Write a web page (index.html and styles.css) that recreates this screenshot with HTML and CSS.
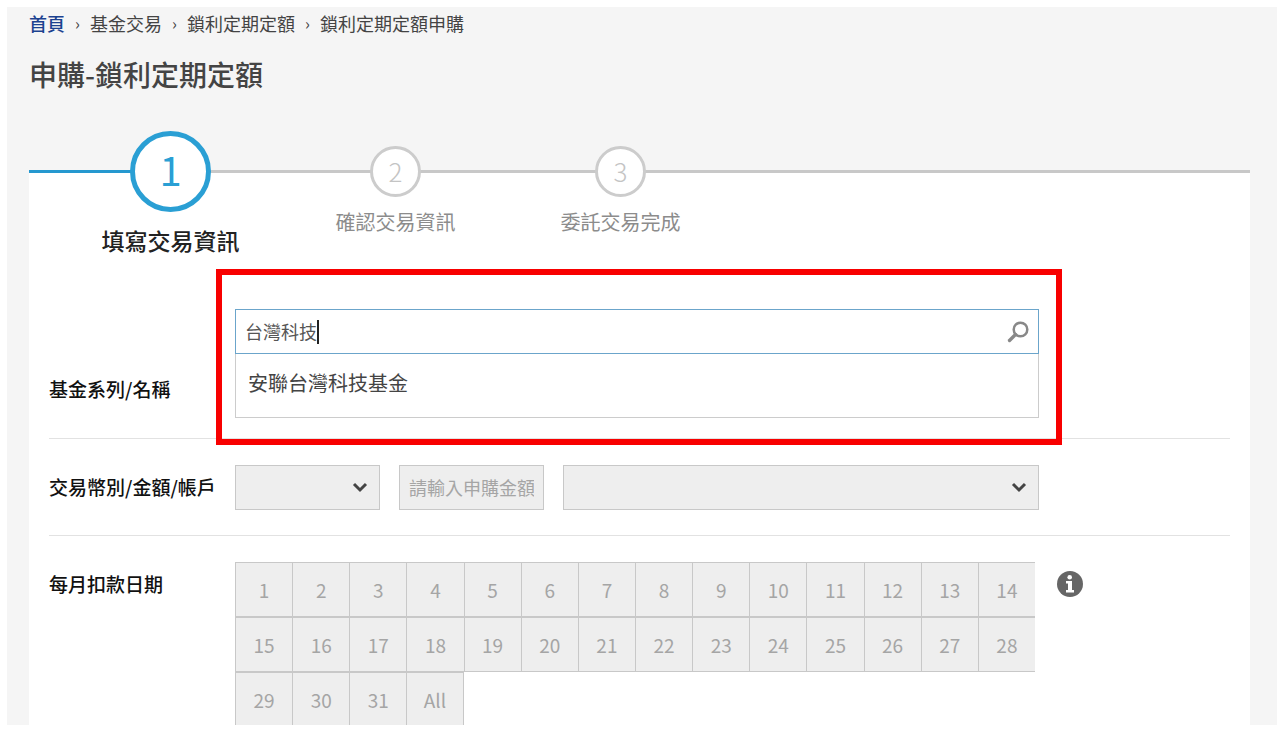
FILE: index.html
```html
<!DOCTYPE html>
<html lang="zh-Hant">
<head>
    <meta charset="UTF-8">
    <meta name="viewport" content="width=device-width, initial-scale=1.0">
    <title>申購-鎖利定期定額</title>
    <link rel="stylesheet" href="styles.css">
</head>
<body>
    <div class="page">
        <nav>
            <ol class="breadcrumb">
                <li><a href="#">首頁</a></li>
                <li>基金交易</li>
                <li>鎖利定期定額</li>
                <li>鎖利定期定額申購</li>
            </ol>
        </nav>
        <h1>申購-鎖利定期定額</h1>

        <main class="panel">
            <ol class="steps">
                <li class="step active">
                    <span class="step-number">1</span>
                    <span class="step-label">填寫交易資訊</span>
                </li>
                <li class="step">
                    <span class="step-number">2</span>
                    <span class="step-label">確認交易資訊</span>
                </li>
                <li class="step">
                    <span class="step-number">3</span>
                    <span class="step-label">委託交易完成</span>
                </li>
            </ol>

            <form class="form">
                <div class="row fund-row">
                    <label class="row-label" for="fund">基金系列/名稱</label>
                    <div class="fund-field">
                        <div class="search-box">
                            <input type="text" id="fund" value="台灣科技" autocomplete="off">
                            <span class="caret"></span>
                            <button type="button" class="search-button" aria-label="搜尋">
                                <svg width="22" height="22" viewBox="0 0 22 22" fill="none" stroke="#888">
                                    <circle cx="13.5" cy="8.5" r="6.8" stroke-width="2.5"/>
                                    <path d="M8.5 13.5L2.5 19.5" stroke-width="3.4" stroke-linecap="round"/>
                                </svg>
                            </button>
                        </div>
                        <ul class="suggestions">
                            <li>安聯台灣科技基金</li>
                        </ul>
                        <div class="highlight"></div>
                    </div>
                </div>

                <div class="row amount-row">
                    <label class="row-label" for="currency">交易幣別/金額/帳戶</label>
                    <div class="amount-fields">
                        <div class="select-box">
                            <select id="currency" disabled></select>
                            <svg class="arrow" width="16" height="12" viewBox="0 0 16 12" fill="none" stroke="#444" stroke-width="3">
                                <path d="M2 2L8 8L14 2"/>
                            </svg>
                        </div>
                        <input type="text" class="amount" placeholder="請輸入申購金額" aria-label="金額" disabled>
                        <div class="select-box">
                            <select aria-label="帳戶" disabled></select>
                            <svg class="arrow" width="16" height="12" viewBox="0 0 16 12" fill="none" stroke="#444" stroke-width="3">
                                <path d="M2 2L8 8L14 2"/>
                            </svg>
                        </div>
                    </div>
                </div>

                <div class="row days-row">
                    <span class="row-label" id="days-label">每月扣款日期</span>
                    <div class="days" role="group" aria-labelledby="days-label">
                        <button type="button" disabled>1</button>
                        <button type="button" disabled>2</button>
                        <button type="button" disabled>3</button>
                        <button type="button" disabled>4</button>
                        <button type="button" disabled>5</button>
                        <button type="button" disabled>6</button>
                        <button type="button" disabled>7</button>
                        <button type="button" disabled>8</button>
                        <button type="button" disabled>9</button>
                        <button type="button" disabled>10</button>
                        <button type="button" disabled>11</button>
                        <button type="button" disabled>12</button>
                        <button type="button" disabled>13</button>
                        <button type="button" disabled>14</button>
                        <button type="button" disabled>15</button>
                        <button type="button" disabled>16</button>
                        <button type="button" disabled>17</button>
                        <button type="button" disabled>18</button>
                        <button type="button" disabled>19</button>
                        <button type="button" disabled>20</button>
                        <button type="button" disabled>21</button>
                        <button type="button" disabled>22</button>
                        <button type="button" disabled>23</button>
                        <button type="button" disabled>24</button>
                        <button type="button" disabled>25</button>
                        <button type="button" disabled>26</button>
                        <button type="button" disabled>27</button>
                        <button type="button" disabled>28</button>
                        <button type="button" disabled>29</button>
                        <button type="button" disabled>30</button>
                        <button type="button" disabled>31</button>
                        <button type="button" class="all" disabled>All</button>
                    </div>
                    <button type="button" class="info-button" aria-label="說明">
                        <svg width="26" height="26" viewBox="0 0 26 26">
                            <circle cx="13" cy="13" r="13" fill="#666"/>
                            <circle cx="12.7" cy="6.2" r="2.3" fill="#fff"/>
                            <path d="M9 10H15V19H17V21.5H9V19H11V12.5H9Z" fill="#fff"/>
                        </svg>
                    </button>
                </div>
            </form>
        </main>
    </div>
</body>
</html>
```
FILE: styles.css
```css
* {
    margin: 0;
    padding: 0;
    box-sizing: border-box;
}

body {
    font-family: "Noto Sans CJK TC", "Noto Sans", sans-serif;
    background: #fff;
    color: #444;
    padding: 7px 8px 12px 7px;
}

button, input, select {
    font-family: inherit;
}

ol, ul {
    list-style: none;
}

svg {
    display: block;
}

.page {
    display: flex;
    flex-direction: column;
    height: calc(100vh - 19px);
    overflow: hidden;
    background: #f5f5f5;
    padding: 5px 27px 0 22px;
}

.breadcrumb {
    display: flex;
    font-size: 18px;
    line-height: 22px;
}

.breadcrumb li {
    display: flex;
}

.breadcrumb li + li::before {
    content: "›";
    width: 25px;
    text-align: center;
    font-size: 16px;
}

.breadcrumb a {
    color: #1c4290;
    font-weight: 500;
    text-decoration: none;
}

h1 {
    font-size: 28px;
    font-weight: 500;
    line-height: 40px;
    margin: 20px 0 76px;
}

.panel {
    flex: 1;
    background: #fff;
    border-top: 3px solid #c8c8c8;
}

.steps {
    position: relative;
    display: flex;
    margin-top: -42px;
    padding-left: 29px;
}

/* finished part of the progress line */
.steps::before {
    content: "";
    position: absolute;
    left: 0;
    top: 39px;
    width: 104px;
    height: 3px;
    background: #2598cf;
}

.step {
    display: flex;
    flex-direction: column;
    align-items: center;
    width: 225px;
    padding-top: 15px;
    color: #8c8c8c;
}

.step-number {
    position: relative;
    display: flex;
    align-items: center;
    justify-content: center;
    width: 51px;
    height: 51px;
    padding-bottom: 2px;
    border: 3px solid #ccc;
    border-radius: 50%;
    background: #fff;
    color: #c4c4c4;
    font-size: 26px;
    font-weight: 300;
}

.step-label {
    margin-top: 12px;
    font-size: 20px;
    line-height: 26px;
}

.step.active {
    padding-top: 0;
    color: #222;
}

.active .step-number {
    width: 81px;
    height: 81px;
    padding-bottom: 5px;
    border: 5px solid #2a9fd4;
    color: #2a9fd4;
    font-size: 40px;
    font-weight: 400;
}

.active .step-label {
    font-size: 23px;
    font-weight: 500;
    line-height: 32px;
}

.form {
    padding: 0 20px;
}

.row {
    display: grid;
    grid-template-columns: 186px 1fr 191px;
    padding: 26px 0 25px;
    border-bottom: 1px solid #e2e2e2;
}

.row-label {
    font-size: 19px;
    font-weight: 500;
    line-height: 43px;
    color: #111;
    white-space: nowrap;
}

.fund-row {
    padding: 53px 0 20px;
}

.fund-row .row-label {
    align-self: end;
    padding-bottom: 8px;
}

.fund-field {
    position: relative;
}

.search-box {
    position: relative;
    display: flex;
    align-items: center;
    height: 45px;
    border: 1px solid #6ba5cb;
}

.search-box input {
    flex: 1;
    height: 100%;
    padding: 0 0 2px 9px;
    border: none;
    outline: none;
    background: none;
    color: #555;
    font-size: 18px;
}

.caret {
    position: absolute;
    left: 81px;
    top: 10px;
    width: 2px;
    height: 24px;
    background: #222;
}

.search-button {
    margin-right: 9px;
    border: none;
    background: none;
    cursor: pointer;
}

.suggestions {
    border: 1px solid #ccc;
    border-top: none;
    padding-bottom: 5px;
}

.suggestions li {
    padding-left: 12px;
    font-size: 20px;
    line-height: 58px;
}

.highlight {
    position: absolute;
    top: -40px;
    right: -23px;
    bottom: -27px;
    left: -19px;
    border: 6px solid #f80000;
    pointer-events: none;
}

.amount-fields {
    display: grid;
    grid-template-columns: 145px 145px 1fr;
    gap: 19px;
}

.select-box {
    position: relative;
}

.select-box select,
.amount {
    appearance: none;
    display: block;
    width: 100%;
    height: 45px;
    padding: 0 9px 2px;
    border: 1px solid #c8c8c8;
    border-radius: 0;
    background: #eee;
    font-size: 18px;
    opacity: 1;
}

.amount::placeholder {
    color: #a5a5a5;
}

.arrow {
    position: absolute;
    right: 12px;
    top: 17px;
    pointer-events: none;
}

.days-row {
    border-bottom: none;
}

.days {
    display: grid;
    grid-template-columns: repeat(14, 1fr);
    padding-right: 4px;
}

.days button {
    height: 55px;
    border: 1px solid #c8c8c8;
    border-right: none;
    background: #eee;
    color: #a5a5a5;
    font-size: 19px;
}

.days .all {
    border-right: 1px solid #c8c8c8;
}

.info-button {
    align-self: start;
    justify-self: start;
    margin: 9px 0 0 18px;
    border: none;
    background: none;
    cursor: pointer;
}
```
